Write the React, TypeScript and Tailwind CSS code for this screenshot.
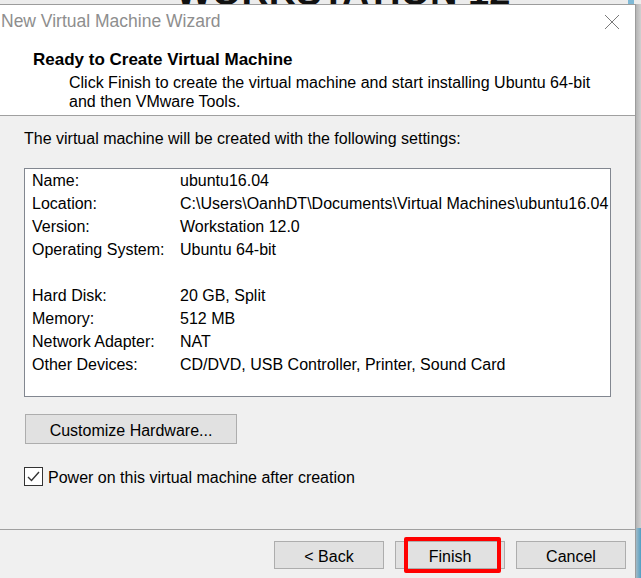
import React from 'react';

const settings: [string, string][] = [
  ['Name:', 'ubuntu16.04'],
  ['Location:', 'C:\\Users\\OanhDT\\Documents\\Virtual Machines\\ubuntu16.04'],
  ['Version:', 'Workstation 12.0'],
  ['Operating System:', 'Ubuntu 64-bit'],
  ['', ''],
  ['Hard Disk:', '20 GB, Split'],
  ['Memory:', '512 MB'],
  ['Network Adapter:', 'NAT'],
  ['Other Devices:', 'CD/DVD, USB Controller, Printer, Sound Card'],
];

const WinButton = ({ label, className = '' }: { label: string; className?: string }) => (
  <button
    className={`h-[28px] w-[110px] border border-[#adadad] bg-[#e1e1e1] pt-[4px] text-[16px] leading-[20px] text-black ${className}`}
  >
    {label}
  </button>
);

export default function App() {
  return (
    <div className="flex h-[578px] w-[641px] flex-col overflow-hidden bg-[#ececec] font-['Liberation_Sans',Arial,sans-serif] text-black">
      {/* desktop behind the wizard */}
      <div className="flex h-[4px] shrink-0 overflow-hidden">
        <div className="-mt-[27px] pl-[176px] text-[38px] font-bold leading-none text-[#111]">
          WORKSTATION 12
        </div>
        <div className="ml-auto mr-[7px] h-[4px] w-[6px] bg-[#7fb9d6]"></div>
      </div>

      <div className="flex min-h-0 flex-1">
        <div className="flex w-[636px] flex-col border-r border-t border-[#9c9c9c]">
          {/* title + header */}
          <div className="bg-white">
            <div className="flex h-[32px] items-center justify-between pl-[1px] pr-[15px]">
              <span className="text-[17.5px] text-[#8e8e8e]">New Virtual Machine Wizard</span>
              <svg width="16" height="16" viewBox="0 0 16 16" className="mt-[1px]">
                <line x1="1" y1="1" x2="15" y2="15" stroke="#7a7a7a" strokeWidth="1" />
                <line x1="15" y1="1" x2="1" y2="15" stroke="#7a7a7a" strokeWidth="1" />
              </svg>
            </div>
            <div className="border-b border-[#a0a0a0] pb-[4px] pl-[33px] pt-[12px]">
              <div className="text-[17px] font-bold leading-[22px]">Ready to Create Virtual Machine</div>
              <div className="mt-[2px] pl-[36px] text-[16px] leading-[19px]">
                Click Finish to create the virtual machine and start installing Ubuntu 64-bit
                <br />
                and then VMware Tools.
              </div>
            </div>
          </div>

          {/* body */}
          <div className="flex flex-1 flex-col bg-[#f0f0f0]">
            <div className="flex flex-1 flex-col px-[24px] pt-[13px]">
              <div className="text-[16px] leading-[20px]">
                The virtual machine will be created with the following settings:
              </div>

              <div className="mt-[19px] h-[229px] border border-[#828790] bg-white pl-[7px]">
                {settings.map(([k, v], i) => (
                  <div key={i} className="grid h-[23px] grid-cols-[148px_1fr] text-[16px] leading-[23px]">
                    <span>{k}</span>
                    <span className="whitespace-nowrap">{v}</span>
                  </div>
                ))}
              </div>

              <button className="ml-[1px] mt-[17px] h-[30px] w-[212px] border border-[#adadad] bg-[#e1e1e1] pt-[4px] text-[16px] leading-[20px]">
                Customize Hardware...
              </button>

              <label className="mt-[23px] flex h-[19px] items-center">
                <span className="flex h-[19px] w-[19px] items-center justify-center border border-[#333] bg-white">
                  <svg width="15" height="15" viewBox="0 0 15 15">
                    <polyline points="2,8 5.5,11.5 13,3" fill="none" stroke="#333" strokeWidth="1.4" />
                  </svg>
                </span>
                <span className="ml-[5px] pt-[2px] text-[16px] leading-[19px]">
                  Power on this virtual machine after creation
                </span>
              </label>
            </div>

            {/* footer */}
            <div className="flex justify-end gap-[11px] border-t border-[#a0a0a0] pb-[9px] pr-[9px] pt-[11px]">
              <WinButton label="< Back" />
              <div className="relative">
                <WinButton label="Finish" />
                <div className="pointer-events-none absolute -bottom-[4px] -top-[4px] left-[9px] right-[4px] rounded-[2px] border-[4px] border-[#ff0000]"></div>
              </div>
              <WinButton label="Cancel" />
            </div>
          </div>
        </div>

        {/* edge of the window behind */}
        <div className="flex w-[5px] flex-col">
          <div className="flex-1 bg-gradient-to-r from-[#b4b4b4] to-[#d0d0d0]"></div>
          <div className="h-[50px] bg-gradient-to-r from-[#9fb9c6] to-[#4f9fc4]"></div>
        </div>
      </div>
    </div>
  );
}
